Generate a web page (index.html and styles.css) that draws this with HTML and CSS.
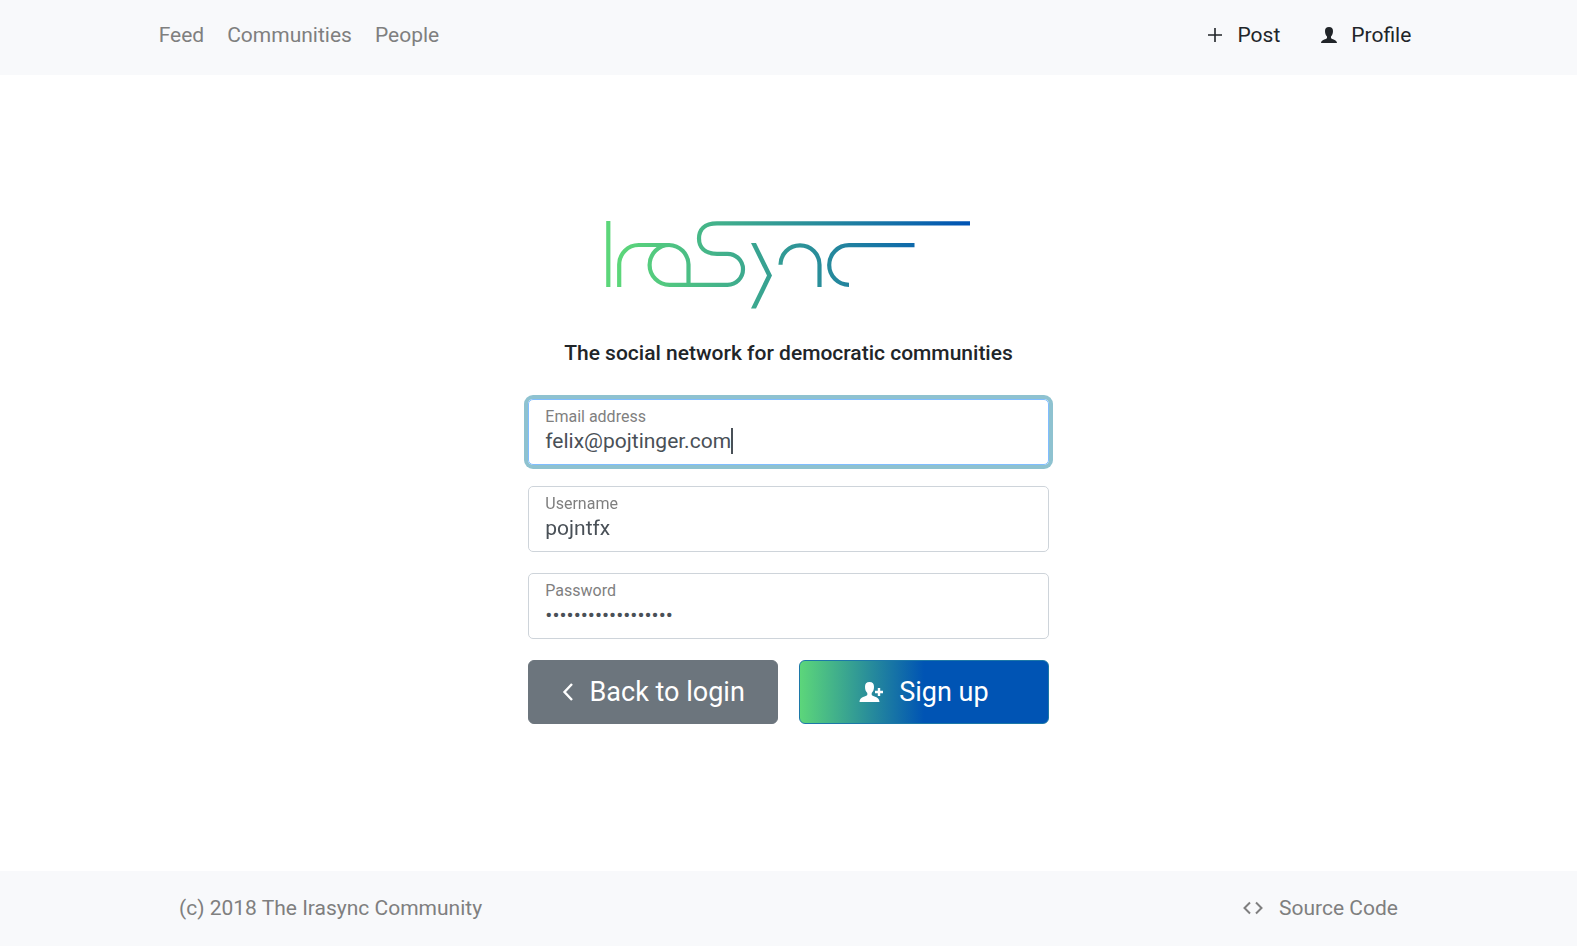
FILE: index.html
```
<!DOCTYPE html>
<html lang="en">
<head>
<meta charset="utf-8">
<meta name="viewport" content="width=device-width, initial-scale=1">
<title>Irasync</title>
<link rel="stylesheet" href="styles.css">
</head>
<body>
<header class="navbar">
  <nav class="nav-links">
    <a href="#feed">Feed</a>
    <a href="#communities">Communities</a>
    <a href="#people">People</a>
  </nav>
  <nav class="nav-actions">
    <a href="#post"><svg class="icon" viewBox="0 0 18 18" aria-hidden="true"><path d="M9 2V16M2 9H16" fill="none" stroke="currentColor" stroke-width="1.6"/></svg>Post</a>
    <a href="#profile"><svg class="icon" viewBox="0 0 18 18" aria-hidden="true"><path d="M9 1C6.300 1 5 2.600 5 5c0 2.500.8 4.500 2 5.500v1.500c-.6 1.600-5.800 1.400-6 5h16c-.2-3.600-5.400-3.400-6-5v-1.500c1.200-1 2-3 2-5.500 0-2.400-1.300-4-4-4z" fill="currentColor"/></svg>Profile</a>
  </nav>
</header>
<main class="main">
  <form class="signup">
    <svg class="logo" viewBox="0 0 366 90" role="img" aria-label="IraSync">
      <defs>
        <linearGradient id="brand" gradientUnits="userSpaceOnUse" x1="20" y1="60" x2="360" y2="0">
          <stop offset="0" stop-color="#5cd67a"/>
          <stop offset="1" stop-color="#0054b4"/>
        </linearGradient>
      </defs>
      <g fill="none" stroke="url(#brand)" stroke-width="4.200">
        <path d="M2.300 1V67"/>
        <path d="M13.200 67V44.500A19.500 19.500 0 0 1 32.700 25H63A20 20 0 0 1 82.500 44.500V65"/>
        <path d="M63.500 25A19.800 19.800 0 0 0 63.500 64.800H121.500A15.500 15.500 0 0 0 121.500 33.800H111C98 33.800 93 27 93 18.600S98 3.400 111 3.400H364"/>
        <path d="M174.500 44.800A19.500 19.500 0 0 1 213.500 44.800V67"/>
        <path d="M243 64.800A19.800 19.800 0 0 1 243 25.200H308.500"/>
      </g>
      <path d="M145 23H150L166 55.500L150 88.500H145L161 55.500Z" fill="url(#brand)"/>
    </svg>
    <h1 class="tagline">The social network for democratic communities</h1>
    <div class="field">
      <label for="email">Email address</label>
      <div class="entry">
        <input id="email" type="email" value="felix@pojtinger.com" autofocus>
      </div>
    </div>
    <div class="field">
      <label for="username">Username</label>
      <div class="entry">
        <input id="username" type="text" value="pojntfx">
      </div>
    </div>
    <div class="field">
      <label for="password">Password</label>
      <div class="entry">
        <input id="password" type="password" value="correcthorsebatter">
      </div>
    </div>
    <div class="buttons">
      <button class="btn btn-back" type="button"><svg class="icon-back" viewBox="0 0 12 20" aria-hidden="true"><path d="M10 2L2.500 10L10 18" fill="none" stroke="currentColor" stroke-width="2.400"/></svg>Back to login</button>
      <button class="btn btn-signup" type="submit"><svg class="icon-add" viewBox="0 0 24 22" aria-hidden="true"><path d="M10.500 1C7.300 1 6 3 6 5.800c0 2.800.8 5 2.300 6.200v2C7.500 15.600.5 15.500.5 21h20c0-5.500-7-5.400-7.800-7v-2C14.200 10.800 15 8.600 15 5.800 15 3 13.700 1 10.500 1z" fill="currentColor"/><path d="M20 7V15M16 11H24" fill="none" stroke="currentColor" stroke-width="2.400"/></svg>Sign up</button>
    </div>
  </form>
</main>
<footer class="footer">
  <span>(c) 2018 The Irasync Community</span>
  <a href="#source"><svg class="icon-code" viewBox="0 0 20 14" aria-hidden="true"><path d="M7 1.500L1.500 7L7 12.500M13 1.500L18.500 7L13 12.500" fill="none" stroke="currentColor" stroke-width="2"/></svg>Source Code</a>
</footer>
</body>
</html>
```
FILE: styles.css
```
* {
  box-sizing: border-box;
}

body {
  margin: 0;
  min-height: 100vh;
  display: flex;
  flex-direction: column;
  background: #fff;
  color: #212529;
  font: 21px/32px Roboto, sans-serif;
}

a {
  color: inherit;
  text-decoration: none;
}

.navbar,
.footer {
  display: flex;
  justify-content: space-between;
  align-items: center;
  background: #f8f9fb;
  color: #7f7f7f;
}

.navbar {
  padding: 19px 10% 24px;
}

.footer {
  padding: 21px 179px 22px;
}

.nav-links,
.nav-actions,
.nav-actions a,
.footer a {
  display: flex;
  align-items: center;
}

.nav-links {
  gap: 23px;
  padding-left: 1px;
}

.nav-actions {
  gap: 40px;
  padding-right: 8px;
  color: #212529;
}

.nav-actions a {
  gap: 13px;
}

.footer a {
  gap: 16px;
}

.icon {
  width: 18px;
  height: 18px;
}

.icon-code {
  width: 20px;
  height: 14px;
}

.main {
  flex: 1;
  display: flex;
  flex-direction: column;
  align-items: center;
  justify-content: center;
  padding-bottom: 3px;
}

.signup {
  width: 33%;
  min-width: 320px;
  display: flex;
  flex-direction: column;
  gap: 21px;
}

.logo {
  width: 366px;
  height: 90px;
  align-self: center;
}

.tagline {
  margin: 0 0 9px;
  padding-top: 6px;
  font-size: 21px;
  line-height: 32px;
  font-weight: 500;
  text-align: center;
}

.field {
  display: flex;
  flex-direction: column;
  padding: 7px 16px 8px;
  border: 1px solid #ced4da;
  border-radius: 5px;
}

.field:focus-within {
  border-color: #80bdff;
  box-shadow: 0 0 0 4px #8ec2d0;
}

.field label {
  color: #7f7f7f;
  font-size: 16px;
  line-height: 20px;
}

.entry {
  display: flex;
  align-items: center;
  height: 29px;
}

.field input {
  min-width: 0;
  max-width: 100%;
  height: 29px;
  padding: 0;
  border: 0;
  outline: 0;
  background: transparent;
  color: #495057;
  caret-color: transparent;
  field-sizing: content;
  font: 21px/29px Roboto, sans-serif;
}

/* Solid, non-blinking caret after the focused value */
.entry:focus-within::after {
  content: "";
  width: 2px;
  height: 26px;
  background: #495057;
}

.buttons {
  display: grid;
  grid-template-columns: 1fr 1fr;
  gap: 21px;
}

.btn {
  display: flex;
  align-items: center;
  justify-content: center;
  gap: 16px;
  height: 64px;
  padding: 0;
  border: 1px solid #6c757d;
  border-radius: 6px;
  color: #fff;
  font: 27px/40px Roboto, sans-serif;
}

.btn-back {
  background: #6c757d;
}

.btn-signup {
  border-color: #1c78a8;
  background: linear-gradient(to right, #5cd67a, #0054b4 50%);
}

.icon-back {
  width: 12px;
  height: 20px;
}

.icon-add {
  width: 24px;
  height: 22px;
}
```
